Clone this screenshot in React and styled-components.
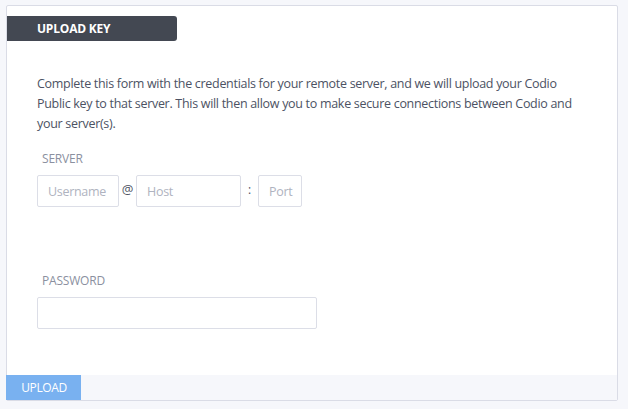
import React from "react";
import styled, { createGlobalStyle } from "styled-components";

const Global = createGlobalStyle`
  html, body { margin: 0; padding: 0; background: #f6f7fb; }
  body { font-family: "Open Sans", "Noto Sans", sans-serif; }
  * { box-sizing: border-box; }
`;

const Page = styled.div`
  padding: 5px 0 0 6px;
`;

const Card = styled.div`
  width: 612px;
  height: 396px;
  background: #fff;
  border: 1px solid #dadce6;
  border-radius: 2px;
  display: flex;
  flex-direction: column;
`;

const Body = styled.div`
  flex: 1;
  padding-top: 10px;
`;

const Tab = styled.div`
  width: 170px;
  height: 25px;
  background: #434852;
  color: #fff;
  font-weight: 700;
  font-size: 12px;
  letter-spacing: -0.2px;
  line-height: 25px;
  padding-left: 30px;
  border-radius: 0 3px 3px 0;
`;

const Content = styled.div`
  padding: 33px 30px 0;
`;

const Intro = styled.p`
  margin: 0;
  font-size: 12.5px;
  letter-spacing: -0.3px;
  line-height: 20px;
  color: #4c5263;
`;

const Label = styled.div`
  margin: ${(p) => p.$top}px 0 7px 5px;
  font-size: 12px;
  letter-spacing: -0.2px;
  line-height: 18px;
  color: #8b90a0;
`;

const Row = styled.div`
  display: flex;
  align-items: center;
`;

const Input = styled.input`
  width: ${(p) => p.$w}px;
  height: 32px;
  border: 1px solid #dcdee7;
  border-radius: 2px;
  padding: 0 0 0 10px;
  font-family: inherit;
  font-size: 12.5px;
  letter-spacing: -0.3px;
  color: #4c5263;
  outline: none;
  background: #fff;
  &::placeholder { color: #afb3c0; }
`;

const Sep = styled.span`
  width: ${(p) => p.$w}px;
  text-align: center;
  font-size: ${(p) => p.$size}px;
  color: #4f5464;
  padding-bottom: 4px;
`;

const Footer = styled.div`
  height: 25px;
  background: #f6f7fb;
  display: flex;
  margin-left: -1px;
`;

const UploadButton = styled.button`
  width: 75px;
  height: 25px;
  border: none;
  background: #79b1f0;
  color: #fff;
  font-family: inherit;
  font-size: 12px;
  letter-spacing: -0.4px;
  padding: 0 0 0 1px;
  cursor: pointer;
`;

export default function App() {
  return (
    <>
      <Global />
      <Page>
        <Card>
          <Body>
            <Tab>UPLOAD KEY</Tab>
            <Content>
              <Intro>
                Complete this form with the credentials for your remote server, and we will
                upload your Codio Public key to that server. This will then allow you to make
                secure connections between Codio and your server(s).
              </Intro>
              <Label $top={16}>SERVER</Label>
              <Row>
                <Input $w={82} placeholder="Username" />
                <Sep $w={17} $size={13}>@</Sep>
                <Input $w={105} placeholder="Host" />
                <Sep $w={17} $size={12}>:</Sep>
                <Input $w={44} placeholder="Port" />
              </Row>
              <Label $top={65}>PASSWORD</Label>
              <Input $w={280} type="password" />
            </Content>
          </Body>
          <Footer>
            <UploadButton>UPLOAD</UploadButton>
          </Footer>
        </Card>
      </Page>
    </>
  );
}
